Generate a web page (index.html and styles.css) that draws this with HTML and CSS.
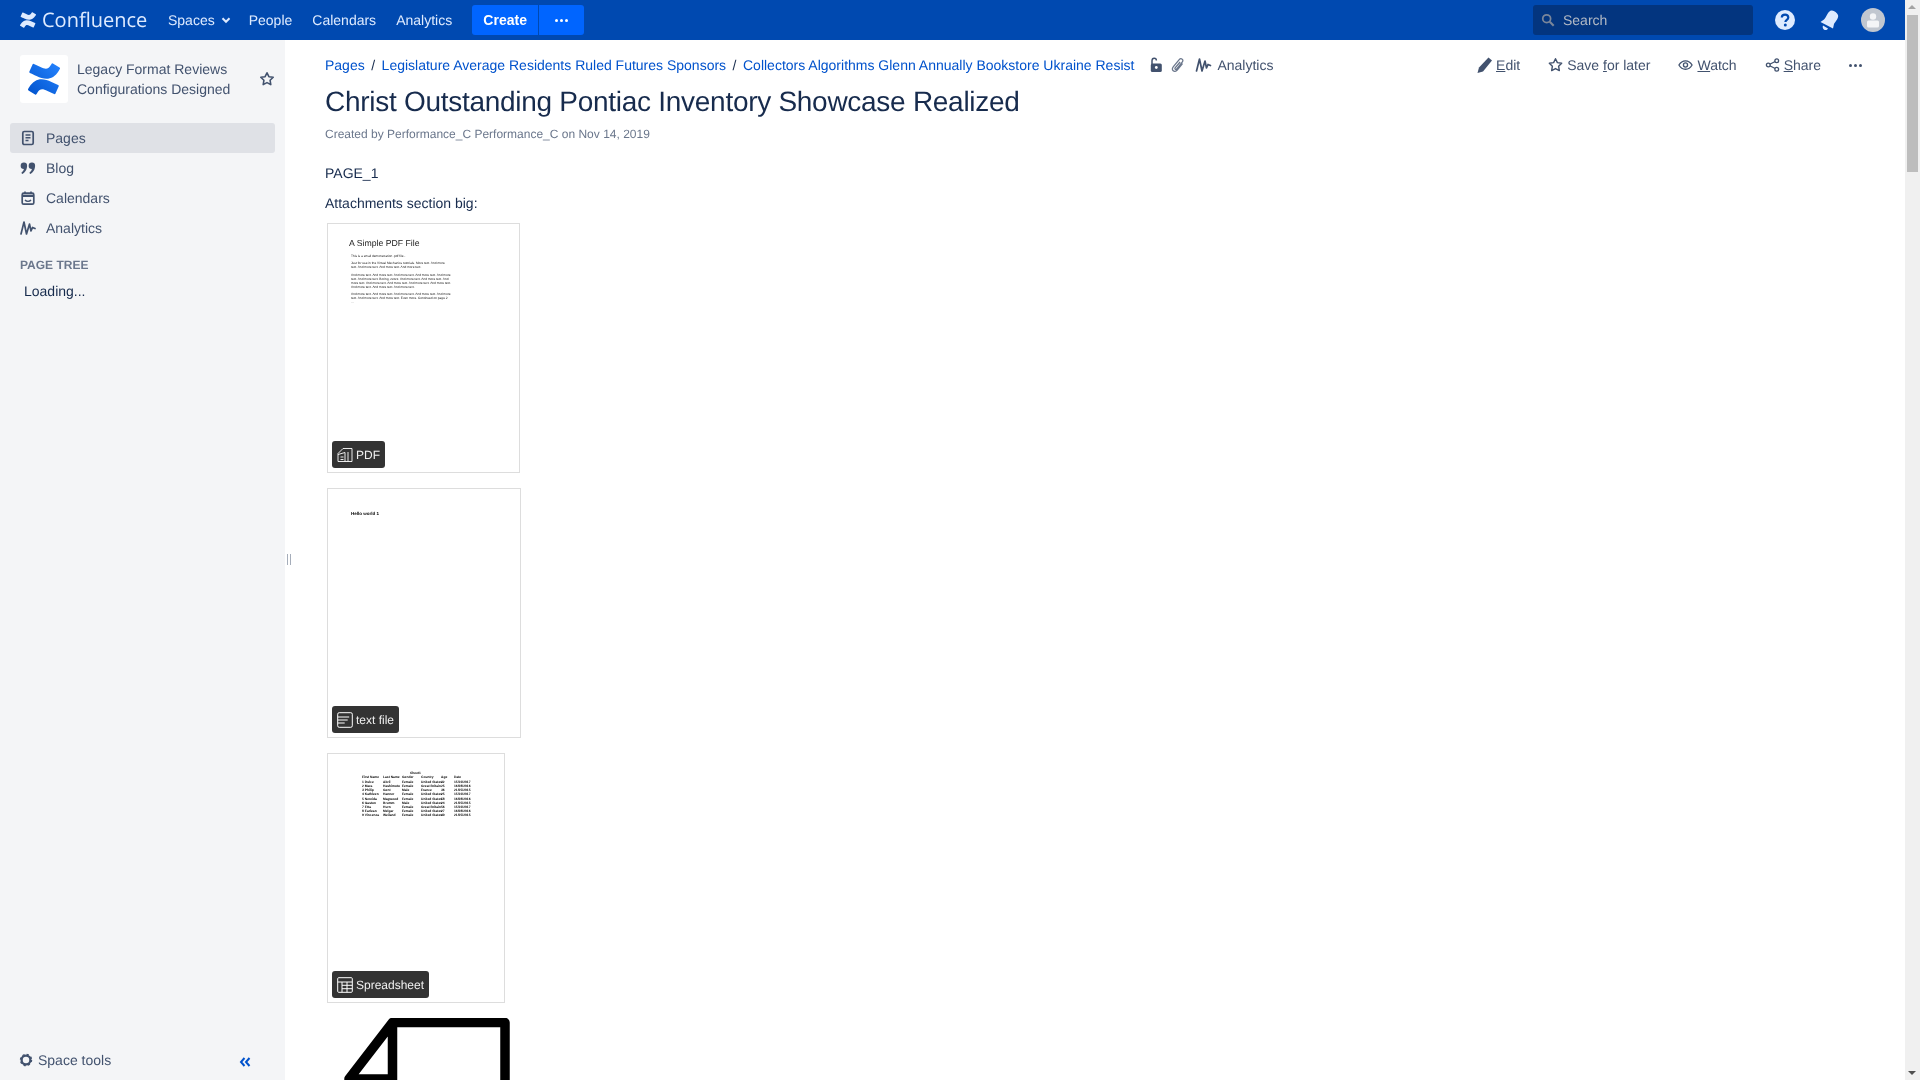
FILE: index.html
```html
<!DOCTYPE html>
<html lang="en">
<head>
    <meta charset="UTF-8">
    <title>Christ Outstanding Pontiac Inventory Showcase Realized</title>
    <link rel="stylesheet" href="styles.css">
</head>
<body>
    <div class="app">
        <header class="topbar">
            <a class="brand">
                <svg class="brand-mark" viewBox="0 0 24 24"><path fill="#deebff" d="M.87 18.257c-.248.382-.53.875-.763 1.245a.764.764 0 0 0 .255 1.04l4.965 3.054a.764.764 0 0 0 1.058-.26c.199-.332.454-.763.733-1.221 1.967-3.247 3.945-2.853 7.508-1.146l4.957 2.337a.764.764 0 0 0 1.028-.382l2.364-5.346a.764.764 0 0 0-.382-1 599.851 599.851 0 0 1-4.965-2.361C10.911 10.97 5.224 11.185.87 18.257zM23.131 5.743c.249-.405.531-.875.764-1.25a.764.764 0 0 0-.256-1.034L18.675.404a.764.764 0 0 0-1.058.26c-.195.335-.451.763-.734 1.225-1.966 3.246-3.945 2.85-7.508 1.146L4.437.694a.764.764 0 0 0-1.027.382L1.046 6.422a.764.764 0 0 0 .382 1c1.039.49 3.105 1.467 4.965 2.361 6.698 3.246 12.392 3.029 16.738-4.04z"/></svg>
                <span class="brand-name">Confluence</span>
            </a>
            <nav class="topnav">
                <a class="spaces">Spaces
                    <svg class="chev" viewBox="0 0 10 10"><path d="M1.5 3.2 5 6.8l3.5-3.6" fill="none" stroke="#deebff" stroke-width="2"/></svg>
                </a>
                <a>People</a>
                <a>Calendars</a>
                <a>Analytics</a>
            </nav>
            <div class="create-group">
                <button class="create-btn">Create</button>
                <button class="more-btn"><span></span><span></span><span></span></button>
            </div>
            <div class="search">
                <svg class="search-icon" viewBox="0 0 16 16"><circle cx="6.5" cy="6.5" r="4.5" fill="none" stroke="#7a869a" stroke-width="2"/><path d="m10 10 4.5 4.5" stroke="#7a869a" stroke-width="2.4"/></svg>
                <span>Search</span>
            </div>
            <svg class="top-icon help" viewBox="0 0 20 20"><circle cx="10" cy="10" r="10" fill="#deebff"/><path d="M6.8 7.6c0-1.9 1.4-3 3.3-3s3.2 1.1 3.2 2.8c0 2.4-2.9 2.4-2.9 4.6" fill="none" stroke="#0049b0" stroke-width="2.2"/><circle cx="10.3" cy="15" r="1.5" fill="#0049b0"/></svg>
            <svg class="top-icon bell" viewBox="0 0 22 22"><path d="M14 1.500c2.200.4 5.300 2.300 6 4.500 1 3-2.500 6.500-4 9l-1 4.500L2.500 13l3.500-2.500C8.500 8.500 10 1 14 1.500z" fill="#deebff"/><path d="M5 16.500l5 3c-1 1.700-2.500 2-3.800 1.200S4.200 18 5 16.500z" fill="#deebff"/></svg>
            <svg class="top-icon avatar" viewBox="0 0 24 24"><circle cx="12" cy="12" r="12" fill="#c1c7d0"/><circle cx="12" cy="8.500" r="3.200" fill="#f4f5f7"/><rect x="6" y="12.500" width="12" height="7" rx="1.500" fill="#f4f5f7"/></svg>
        </header>

        <div class="layout">
            <aside class="sidebar">
                <div class="space-head">
                    <div class="space-logo">
                        <svg viewBox="0 0 24 24"><defs><linearGradient id="cf" x1="0" y1="1" x2="1" y2="0"><stop offset="0" stop-color="#0052cc"/><stop offset="1" stop-color="#2684ff"/></linearGradient></defs><path fill="url(#cf)" d="M.87 18.257c-.248.382-.53.875-.763 1.245a.764.764 0 0 0 .255 1.04l4.965 3.054a.764.764 0 0 0 1.058-.26c.199-.332.454-.763.733-1.221 1.967-3.247 3.945-2.853 7.508-1.146l4.957 2.337a.764.764 0 0 0 1.028-.382l2.364-5.346a.764.764 0 0 0-.382-1 599.851 599.851 0 0 1-4.965-2.361C10.911 10.97 5.224 11.185.87 18.257zM23.131 5.743c.249-.405.531-.875.764-1.25a.764.764 0 0 0-.256-1.034L18.675.404a.764.764 0 0 0-1.058.26c-.195.335-.451.763-.734 1.225-1.966 3.246-3.945 2.85-7.508 1.146L4.437.694a.764.764 0 0 0-1.027.382L1.046 6.422a.764.764 0 0 0 .382 1c1.039.49 3.105 1.467 4.965 2.361 6.698 3.246 12.392 3.029 16.738-4.04z"/></svg>
                    </div>
                    <div class="space-name">Legacy Format Reviews Configurations Designed</div>
                    <svg class="space-star" viewBox="0 0 16 16"><path d="m8 1.800 1.900 3.900 4.300.6-3.100 3 .7 4.300L8 11.600l-3.800 2 .7-4.300-3.100-3 4.300-.6z" fill="none" stroke="#42526e" stroke-width="1.600" stroke-linejoin="round"/></svg>
                </div>
                <ul class="side-nav">
                    <li class="active">
                        <svg viewBox="0 0 16 16"><rect x="2.800" y="1.500" width="10.400" height="13" rx="1.500" fill="none" stroke="#42526e" stroke-width="1.700"/><path d="M5.500 5h5M5.500 7.800h5M5.500 10.500h3" stroke="#42526e" stroke-width="1.400"/></svg>
                        Pages
                    </li>
                    <li>
                        <svg viewBox="0 0 16 16"><path d="M4 2.500a3.100 3.100 0 0 1 3.100 3.100c0 4-2 7.300-5 8.400l-.7-1.300c1.400-.9 2.200-2.100 2.500-3.600A3.100 3.100 0 0 1 4 2.500zM12 2.500a3.100 3.100 0 0 1 3.100 3.100c0 4-2 7.300-5 8.400l-.7-1.300c1.400-.9 2.200-2.100 2.500-3.600A3.100 3.100 0 0 1 12 2.500z" fill="#42526e"/></svg>
                        Blog
                    </li>
                    <li>
                        <svg viewBox="0 0 16 16"><rect x="2.200" y="3.200" width="11.600" height="11" rx="1.500" fill="none" stroke="#42526e" stroke-width="1.700"/><path d="M2.500 5.800h11" stroke="#42526e" stroke-width="2.400"/><path d="M5 1.500v2.500M11 1.500v2.500" stroke="#42526e" stroke-width="1.600"/><path d="M5 10c1.500 1.800 4.500 1.800 6 0" fill="none" stroke="#42526e" stroke-width="1.400"/></svg>
                        Calendars
                    </li>
                    <li>
                        <svg viewBox="0 0 16 16"><path d="M1 14 4 2l2.500 12L9.500 4 11 11l1.500-3.500 2.500 1" fill="none" stroke="#42526e" stroke-width="1.700" stroke-linejoin="round" stroke-linecap="round"/></svg>
                        Analytics
                    </li>
                </ul>
                <h5 class="tree-title">PAGE TREE</h5>
                <div class="tree-loading">Loading...</div>
                <div class="side-foot">
                    <a class="space-tools">
                        <svg viewBox="0 0 16 16"><circle cx="8" cy="8" r="5" fill="none" stroke="#42526e" stroke-width="2.600"/><circle cx="8" cy="8" r="6.300" fill="none" stroke="#42526e" stroke-width="1.600" stroke-dasharray="2.500 2.450"/></svg>
                        Space tools
                    </a>
                    <svg class="collapse" viewBox="0 0 12 10"><path d="M5.500 1 2 5l3.500 4M10.500 1 7 5l3.500 4" fill="none" stroke="#0052cc" stroke-width="2"/></svg>
                </div>
            </aside>
            <div class="grip"><span></span><span></span></div>

            <main class="content">
                <div class="page-top">
                    <ol class="crumbs">
                        <li><a>Pages</a></li>
                        <li><a>Legislature Average Residents Ruled Futures Sponsors</a></li>
                        <li><a>Collectors Algorithms Glenn Annually Bookstore Ukraine Resist</a></li>
                    </ol>
                    <div class="page-meta">
                        <svg class="lock" viewBox="0 0 14 16"><path d="M3 7V3.800C3 2.200 4 1.200 5.200 1.200S7.400 2 7.400 3.400" fill="none" stroke="#42526e" stroke-width="1.500"/><rect x="1.800" y="6.500" width="11" height="8.500" rx="1.500" fill="#42526e"/><circle cx="7.300" cy="10.500" r="1.400" fill="#fff"/></svg>
                        <svg class="clip" viewBox="0 0 14 16"><path d="M11.500 6.500 6.200 13c-1.300 1.600-3 1.600-4 .7s-1-2.500.2-4l5.800-7c.9-1.100 2.100-1.200 3-.5s.9 1.900 0 3l-5.500 6.600c-.5.600-1.100.7-1.500.4s-.4-.9.100-1.500l4.800-5.700" fill="none" stroke="#6b778c" stroke-width="1.300"/></svg>
                        <a class="analytics">
                            <svg viewBox="0 0 16 16"><path d="M1 14 4 2l2.500 12L9.500 4 11 11l1.500-3.500 2.500 1" fill="none" stroke="#42526e" stroke-width="1.700" stroke-linejoin="round" stroke-linecap="round"/></svg>
                            Analytics
                        </a>
                    </div>
                    <div class="actions">
                        <a class="act-edit">
                            <svg viewBox="0 0 15 16"><path d="M11.500.5 15 3.500 6 14.500.5 16l1.500-5.500z" fill="#42526e"/></svg>
                            <span><u>E</u>dit</span>
                        </a>
                        <a class="act-save">
                            <svg viewBox="0 0 16 16"><path d="m8 1.300 2 4.200 4.600.6-3.300 3.200.8 4.700L8 11.800 3.900 14l.8-4.700-3.300-3.200L6 5.500z" fill="none" stroke="#42526e" stroke-width="1.500" stroke-linejoin="round"/></svg>
                            <span>Save <u>f</u>or later</span>
                        </a>
                        <a class="act-watch">
                            <svg viewBox="0 0 16 16"><path d="M1 8c1.700-3 4-4.500 7-4.500S13.300 5 15 8c-1.700 3-4 4.500-7 4.500S2.700 11 1 8z" fill="none" stroke="#42526e" stroke-width="1.400"/><circle cx="8" cy="8" r="2.200" fill="none" stroke="#42526e" stroke-width="1.400"/></svg>
                            <span><u>W</u>atch</span>
                        </a>
                        <a class="act-share">
                            <svg viewBox="0 0 16 16"><path d="M12.500 3.500 3.500 8l9 4.500" fill="none" stroke="#42526e" stroke-width="1.300"/><circle cx="12.500" cy="3.500" r="2" fill="#fff" stroke="#42526e" stroke-width="1.400"/><circle cx="3.500" cy="8" r="2" fill="#fff" stroke="#42526e" stroke-width="1.400"/><circle cx="12.500" cy="12.500" r="2" fill="#fff" stroke="#42526e" stroke-width="1.400"/></svg>
                            <span><u>S</u>hare</span>
                        </a>
                        <a class="act-more"><span></span><span></span><span></span></a>
                    </div>
                </div>

                <h1 class="page-title">Christ Outstanding Pontiac Inventory Showcase Realized</h1>
                <p class="byline">Created by Performance_C Performance_C on Nov 14, 2019</p>
                <p class="para first">PAGE_1</p>
                <p class="para">Attachments section big:</p>

                <div class="file-card pdf">
                    <div class="pdf-doc">
                        <div class="pdf-title">A Simple PDF File</div>
                        <p>This is a small demonstration .pdf file -</p>
                        <p>Just for use in the Virtual Mechanics tutorials. More text. And more text. And more text. And more text. And more text.</p>
                        <p>And more text. And more text. And more text. And more text. And more text. And more text. Boring, zzzzz. And more text. And more text. And more text. And more text. And more text. And more text. And more text. And more text. And more text. And more text.</p>
                        <p>And more text. And more text. And more text. And more text. And more text. And more text. And more text. Even more. Continued on page 2 ...</p>
                    </div>
                    <div class="file-badge">
                        <svg viewBox="0 0 16 16"><path d="M1 6.500 6 1.500h9v13H1z M11 5v9.500 M1 7.500l7-2v9 M3.500 10h3M3.500 12.500h3" fill="none" stroke="#fff" stroke-width=".9"/></svg>
                        PDF
                    </div>
                </div>

                <div class="file-card txt">
                    <div class="txt-doc">Hello world 1</div>
                    <div class="file-badge">
                        <svg viewBox="0 0 16 16"><rect x=".7" y=".7" width="14.600" height="14.600" rx="1.500" fill="none" stroke="#fff" stroke-width="1"/><path d="M.7 5h11.500M.7 8h10M.7 11h7" stroke="#fff" stroke-width="1"/></svg>
                        text file
                    </div>
                </div>

                <div class="file-card xls">
                    <div class="xls-doc">
                        <div class="xls-name">Sheet1</div>
                        <div class="xls-row head"><span>First Name</span><span>Last Name</span><span>Gender</span><span>Country</span><span>Age</span><span>Date</span></div>
                        <div class="xls-row"><span>1 Dulce</span><span>Abril</span><span>Female</span><span>United States</span><span>32</span><span>15/10/2017</span></div>
                        <div class="xls-row"><span>2 Mara</span><span>Hashimoto</span><span>Female</span><span>Great Britain</span><span>25</span><span>16/08/2016</span></div>
                        <div class="xls-row"><span>3 Philip</span><span>Gent</span><span>Male</span><span>France</span><span>36</span><span>21/05/2015</span></div>
                        <div class="xls-row"><span>4 Kathleen</span><span>Hanner</span><span>Female</span><span>United States</span><span>25</span><span>15/10/2017</span></div>
                        <div class="xls-row"><span>5 Nereida</span><span>Magwood</span><span>Female</span><span>United States</span><span>58</span><span>16/08/2016</span></div>
                        <div class="xls-row"><span>6 Gaston</span><span>Brumm</span><span>Male</span><span>United States</span><span>24</span><span>21/05/2015</span></div>
                        <div class="xls-row"><span>7 Etta</span><span>Hurn</span><span>Female</span><span>Great Britain</span><span>56</span><span>15/10/2017</span></div>
                        <div class="xls-row"><span>8 Earlean</span><span>Melgar</span><span>Female</span><span>United States</span><span>27</span><span>16/08/2016</span></div>
                        <div class="xls-row"><span>9 Vincenza</span><span>Weiland</span><span>Female</span><span>United States</span><span>40</span><span>21/05/2015</span></div>
                    </div>
                    <div class="file-badge">
                        <svg viewBox="0 0 16 16"><rect x=".7" y=".7" width="14.600" height="14.600" rx="1" fill="none" stroke="#fff" stroke-width="1"/><path d="M.7 5h14.600M5 5v10.300M5 8.300h10.300M5 11.700h10.300M10 5v10.300" stroke="#fff" stroke-width="1"/></svg>
                        Spreadsheet
                    </div>
                </div>

                <svg class="file-large" viewBox="0 0 185 62" width="185" height="62">
                    <path d="M64.500 4.500H177V100H64.500zM64.500 4.500 21 61h43.500z" fill="none" stroke="#000" stroke-width="9.500" stroke-linejoin="round"/>
                </svg>
            </main>
        </div>
    </div>

    <div class="scrollbar">
        <span class="arrow-up"></span>
        <span class="thumb"></span>
        <span class="arrow-down"></span>
    </div>
</body>
</html>
```

FILE: styles.css
```css
html, body {
    margin: 0;
    height: 100%;
    overflow: hidden;
}

body {
    display: flex;
    font-family: "Liberation Sans", Arial, sans-serif;
    font-size: 14px;
    color: #172b4d;
    background: #fff;
    text-rendering: geometricPrecision;
}

.app {
    flex: 1;
    min-width: 0;
    display: flex;
    flex-direction: column;
    height: 1080px;
    will-change: transform;
}

/* top bar */
.topbar {
    flex: 0 0 40px;
    display: flex;
    align-items: center;
    background: #0049b0;
    color: #deebff;
}

.brand {
    display: flex;
    align-items: center;
    margin-left: 20px;
    width: 148px;
}

.brand-mark {
    width: 16px;
    height: 16px;
}

.brand-name {
    font-family: "Open Sans", sans-serif;
    font-size: 20px;
    line-height: 24px;
    margin-left: 6px;
    color: #deebff;
}

.topnav {
    display: flex;
    align-items: center;
    gap: 20px;
}

.spaces {
    display: flex;
    align-items: center;
    gap: 6px;
    margin-right: -2px;
}

.chev {
    width: 10px;
    height: 10px;
}

.create-group {
    display: flex;
    margin-left: 20px;
    gap: 1px;
}

.create-btn,
.more-btn {
    height: 30px;
    border: none;
    background: #0065ff;
    color: #fff;
    font-family: inherit;
    font-size: 14px;
    font-weight: bold;
    padding: 0;
}

.create-btn {
    width: 66px;
    border-radius: 3px 0 0 3px;
}

.more-btn {
    width: 45px;
    border-radius: 0 3px 3px 0;
    display: flex;
    align-items: center;
    justify-content: center;
    gap: 2px;
}

.more-btn span,
.act-more span {
    width: 3px;
    height: 3px;
    border-radius: 50%;
    background: #fff;
}

.search {
    display: flex;
    align-items: center;
    margin-left: auto;
    width: 220px;
    height: 30px;
    background: #03357f;
    border-radius: 3px;
    color: #b3bac5;
}

.search-icon {
    width: 14px;
    height: 14px;
    margin: 0 8px 0 8px;
}

.top-icon {
    flex: none;
    width: 20px;
    height: 20px;
}

.help {
    margin-left: 22px;
}

.bell {
    width: 22px;
    height: 22px;
    margin-left: 23px;
}

.avatar {
    width: 24px;
    height: 24px;
    margin: 0 20px 0 21px;
}

/* sidebar */
.layout {
    flex: 1;
    display: flex;
    min-height: 0;
    position: relative;
}

.sidebar {
    flex: 0 0 285px;
    display: flex;
    flex-direction: column;
    background: #f4f5f7;
    color: #42526e;
}

.space-head {
    display: flex;
    align-items: center;
    margin: 15px 0 20px 20px;
    height: 48px;
}

.space-logo {
    flex: none;
    width: 48px;
    height: 48px;
    background: #fff;
    border-radius: 3px;
    display: flex;
    align-items: center;
    justify-content: center;
}

.space-logo svg {
    width: 32px;
    height: 32px;
}

.space-name {
    width: 170px;
    margin-left: 9px;
    line-height: 20px;
}

.space-star {
    width: 16px;
    height: 16px;
    margin-left: 12px;
}

.side-nav {
    list-style: none;
    margin: 0;
    padding: 0 10px;
    width: 265px;
}

.side-nav li {
    display: flex;
    align-items: center;
    height: 30px;
    border-radius: 3px;
    padding-left: 10px;
    gap: 10px;
}

.side-nav svg {
    width: 16px;
    height: 16px;
}

.side-nav .active {
    background: #dfe1e6;
}

.tree-title {
    margin: 15px 0 0 20px;
    font-size: 12px;
    line-height: 14px;
    font-weight: bold;
    color: #6b778c;
}

.tree-loading {
    margin: 11px 0 0 24px;
    line-height: 16px;
    color: #172b4d;
}

.side-foot {
    margin-top: auto;
    height: 40px;
    display: flex;
    align-items: center;
    padding: 0 34px 0 19px;
    justify-content: space-between;
}

.space-tools {
    display: flex;
    align-items: center;
    gap: 5px;
}

.space-tools svg {
    width: 14px;
    height: 14px;
}

.collapse {
    width: 12px;
    height: 10px;
    margin-top: 3px;
}

.grip {
    flex: none;
    width: 40px;
    display: flex;
    gap: 2px;
    padding: 514px 0 0 2px;
    box-sizing: border-box;
    margin-right: -40px;
}

.grip span {
    width: 1px;
    height: 11px;
    background: #a5adba;
}

/* page */
.content {
    flex: 1;
    min-width: 0;
    padding: 0 0 0 40px;
    overflow: hidden;
}

.page-top {
    display: flex;
    align-items: center;
    height: 20px;
    margin-top: 15px;
}

.crumbs {
    list-style: none;
    display: flex;
    margin: 0;
    padding: 0;
}

.crumbs li + li::before {
    content: "/";
    margin: 0 6.500px;
    color: #172b4d;
}

.crumbs a {
    color: #0052cc;
}

.page-meta {
    display: flex;
    align-items: center;
    margin-left: 15px;
    color: #42526e;
}

.lock,
.clip {
    width: 14px;
    height: 16px;
}

.clip {
    margin-left: 8px;
}

.analytics {
    display: flex;
    align-items: center;
    gap: 5px;
    margin-left: 10px;
}

.analytics svg {
    width: 17px;
    height: 16px;
}

.actions {
    display: flex;
    align-items: center;
    margin-left: auto;
    margin-right: 43px;
    color: #42526e;
}

.actions a {
    display: flex;
    align-items: center;
    gap: 4px;
}

.actions svg {
    width: 15px;
    height: 16px;
}

.act-save,
.act-watch,
.act-share {
    margin-left: 28px;
}

.act-more {
    margin-left: 28px;
    gap: 2px !important;
}

.act-more span {
    background: #42526e;
}

.page-title {
    margin: 10px 0 0;
    font-size: 28px;
    line-height: 34px;
    font-weight: normal;
    letter-spacing: -.01em;
    color: #172b4d;
}

.byline {
    margin: 5px 0 0;
    font-size: 12px;
    line-height: 20px;
    color: #6b778c;
}

.para {
    margin: 10px 0 0;
    line-height: 20px;
}

.para.first {
    margin-top: 19px;
}

.file-card {
    position: relative;
    box-sizing: border-box;
    width: 193px;
    height: 250px;
    margin: 0 0 15px 2px;
    border: 1px solid #ddd;
    overflow: hidden;
}

.para + .file-card {
    margin-top: 10px;
}

.file-card.txt {
    width: 194px;
}

.file-card.xls {
    width: 178px;
}

.file-badge {
    position: absolute;
    left: 4px;
    bottom: 4px;
    display: flex;
    align-items: center;
    height: 27px;
    padding: 0 5px;
    gap: 3px;
    background: #333;
    border-radius: 3px;
    color: #f0f0f0;
    font-size: 12px;
}

.file-badge svg {
    width: 16px;
    height: 16px;
}

.pdf-doc {
    padding: 14px 0 0 23px;
    width: 100px;
    color: #222;
    font-size: 3.200px;
    line-height: 4px;
    filter: blur(.3px);
}

.pdf-title {
    font-size: 8.700px;
    line-height: 11px;
    margin: 0 0 4.700px -2px;
    white-space: nowrap;
}

.pdf-doc p {
    margin: 0 0 3.500px;
}

.txt-doc {
    padding: 22px 0 0 23px;
    font-size: 4.500px;
    line-height: 6px;
    font-weight: bold;
    color: #000;
}

.xls-doc {
    margin: 17px 0 0 34px;
    font-size: 3.300px;
    line-height: 4.100px;
    font-weight: bold;
    color: #000;
    white-space: nowrap;
}

.xls-name {
    text-align: center;
    width: 107px;
}

.xls-row {
    display: grid;
    grid-template-columns: 21px 19px 19px 20px 13px 21px;
    width: 113px;
    overflow: hidden;
}

.xls-row.head {
    margin-bottom: 1px;
}

.file-large {
    display: block;
    margin-left: 3px;
}

/* scrollbar */
.scrollbar {
    flex: 0 0 15px;
    position: relative;
    height: 1080px;
    background: #f0f0f0;
}

.thumb {
    position: absolute;
    top: 15px;
    left: 2px;
    width: 11px;
    height: 157px;
    background: #bdbdbd;
}

.arrow-up,
.arrow-down {
    position: absolute;
    left: 3px;
    width: 0;
    height: 0;
    border-left: 4.500px solid transparent;
    border-right: 4.500px solid transparent;
}

.arrow-up {
    top: 5px;
    border-bottom: 4px solid #a3a3a3;
}

.arrow-down {
    bottom: 5px;
    border-top: 4px solid #505050;
}
```
